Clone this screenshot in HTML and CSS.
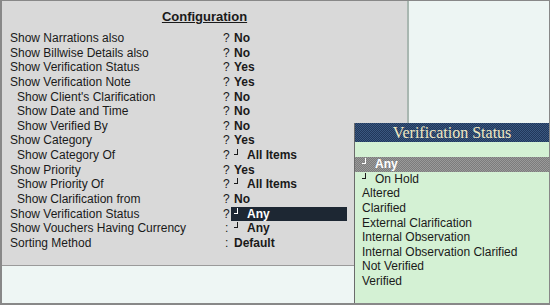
FILE: index.html
```html
<!DOCTYPE html>
<html lang="en">
<head>
<meta charset="UTF-8" />
<title>Configuration</title>
<link rel="stylesheet" href="styles.css">
</head>
<body>

<div class="frame">
  <div class="top">
    <div class="config">
      <div class="title">Configuration</div>
      <div class="rows">
        <div class="row"><span class="label">Show Narrations also</span><span class="sep">?</span><span class="val">No</span></div>
        <div class="row"><span class="label">Show Billwise Details also</span><span class="sep">?</span><span class="val">No</span></div>
        <div class="row"><span class="label">Show Verification Status</span><span class="sep">?</span><span class="val">Yes</span></div>
        <div class="row"><span class="label">Show Verification Note</span><span class="sep">?</span><span class="val">Yes</span></div>
        <div class="row sub"><span class="label">Show Client's Clarification</span><span class="sep">?</span><span class="val">No</span></div>
        <div class="row sub"><span class="label">Show Date and Time</span><span class="sep">?</span><span class="val">No</span></div>
        <div class="row sub"><span class="label">Show Verified By</span><span class="sep">?</span><span class="val">No</span></div>
        <div class="row"><span class="label">Show Category</span><span class="sep">?</span><span class="val">Yes</span></div>
        <div class="row sub"><span class="label">Show Category Of</span><span class="sep">?</span><span class="val"><i class="mark"></i>All Items</span></div>
        <div class="row"><span class="label">Show Priority</span><span class="sep">?</span><span class="val">Yes</span></div>
        <div class="row sub"><span class="label">Show Priority Of</span><span class="sep">?</span><span class="val"><i class="mark"></i>All Items</span></div>
        <div class="row sub"><span class="label">Show Clarification from</span><span class="sep">?</span><span class="val">No</span></div>
        <div class="row"><span class="label">Show Verification Status</span><span class="sep">?</span><span class="val active"><i class="mark"></i>Any</span></div>
        <div class="row"><span class="label">Show Vouchers Having Currency</span><span class="sep colon">:</span><span class="val"><i class="mark"></i>Any</span></div>
        <div class="row"><span class="label">Sorting Method</span><span class="sep colon">:</span><span class="val">Default</span></div>
      </div>
    </div>
    <div class="side"></div>
  </div>
  <div class="bottom"></div>

  <div class="popup">
    <div class="popup-head">Verification Status</div>
    <div class="popup-list">
      <div class="item blank"></div>
      <div class="item current"><i class="mark"></i>Any</div>
      <div class="item"><i class="mark"></i>On Hold</div>
      <div class="item">Altered</div>
      <div class="item">Clarified</div>
      <div class="item">External Clarification</div>
      <div class="item">Internal Observation</div>
      <div class="item">Internal Observation Clarified</div>
      <div class="item">Not Verified</div>
      <div class="item">Verified</div>
    </div>
  </div>
</div>

</body>
</html>
```

FILE: styles.css
```css
body {
  margin: 0;
  font-family: "Liberation Sans", Arial, sans-serif;
  font-size: 12px;
  color: #1a1a1a;
}
.frame {
  position: relative;
  width: 550px;
  height: 305px;
  box-sizing: border-box;
  border: 1px solid #888;
  border-left-width: 2px;
  border-bottom-width: 2px;
  display: flex;
  flex-direction: column;
  overflow: hidden;
}
.top {
  display: flex;
  height: 264px;
  border-bottom: 1px solid #9a9a9a;
}
.config {
  width: 405px;
  background: #d9d9d9;
  border-right: 2px solid #a9b7b1;
}
.side {
  flex: 1;
  background: #edf5f3;
}
.bottom {
  flex: 1;
  background: #eef6f4;
}
.title {
  text-align: center;
  font-weight: bold;
  font-size: 13px;
  text-decoration: underline;
  padding-top: 8px;
  height: 22px;
}
.rows {
  line-height: 14.64px;
}
.row {
  display: grid;
  grid-template-columns: 213px 8px 116px;
  padding-left: 8px;
}
.row.sub .label {
  padding-left: 7px;
}
.sep.colon {
  padding-left: 2px;
}
.val {
  font-weight: bold;
  padding-left: 3px;
}
.val.active {
  background: #1d2733;
  color: #fff;
}
.mark {
  display: inline-block;
  width: 3px;
  height: 5px;
  border-right: 1.5px solid currentColor;
  border-bottom: 1.5px solid currentColor;
  vertical-align: 4px;
  margin-right: 9px;
  margin-left: 0;
}
.popup {
  position: absolute;
  left: 352px;
  top: 122px;
  right: 0;
  bottom: 0;
  border-left: 1px solid #6b6b6b;
  background: #d4f1d4;
}
.popup-head {
  height: 19px;
  line-height: 19px;
  text-align: center;
  font-family: "Liberation Serif", "Times New Roman", serif;
  font-size: 16px;
  color: #efe8c2;
  background: #2c4569 repeating-conic-gradient(#21375a 0 25%, #3a5880 0 50%) 0 0 / 2px 2px;
}
.popup-list {
  line-height: 14.64px;
  padding-left: 7px;
}
.item.blank {
  height: 15px;
}
.item.current {
  margin-left: -7px;
  padding-left: 7px;
  background: #8b8b8b repeating-conic-gradient(#7c7c7c 0 25%, #9a9a9a 0 50%) 0 0 / 2px 2px;
  color: #fff;
  font-weight: bold;
}
```
